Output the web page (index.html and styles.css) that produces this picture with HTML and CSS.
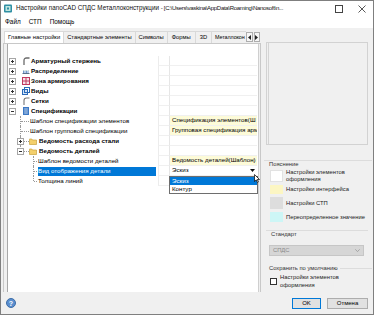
FILE: index.html
```html
<!DOCTYPE html>
<html>
<head>
<meta charset="utf-8">
<link rel="stylesheet" href="styles.css">
</head>
<body>
<div class="window">
  <div class="titlebar">
    <svg class="app-icon" viewBox="0 0 8 9"><rect x="0" y="0.5" width="8" height="8" rx="1" fill="#2f8fa3"/><rect x="1.5" y="2" width="5" height="5" fill="#bfe6e0"/><rect x="3" y="3.5" width="2" height="2" fill="#2f8fa3"/></svg>
    <span class="title">Настройки nanoCAD СПДС Металлоконструкции <span class="path">- [C:\Users\vaskina\AppData\Roaming\Nanosoft\n...</span></span>
    <span class="wbtn"><svg width="8" height="8" viewBox="0 0 8 8"><rect x="0.5" y="0.5" width="7" height="7" fill="none" stroke="#444"/></svg></span>
    <span class="wbtn close"><svg width="8" height="8" viewBox="0 0 8 8"><path d="M0.5 0.5L7.5 7.5M7.5 0.5L0.5 7.5" stroke="#444" stroke-width="0.9"/></svg></span>
  </div>
  <div class="menubar"><span>Файл</span><span>СТП</span><span>Помощь</span></div>
  <div class="client">
    <div class="main">
      <div class="left">
        <div class="tabs">
          <div class="tab-list">
            <span class="tab active">Главные настройки</span>
            <span class="tab">Стандартные элементы</span>
            <span class="tab">Символы</span>
            <span class="tab wide">Формы</span>
            <span class="tab wider">3D</span>
            <span class="tab last">Металлокон</span>
          </div>
          <div class="tab-arrows">
            <span class="tarr"><svg width="3" height="5" viewBox="0 0 3 5"><path d="M3 0V5L0 2.5Z" fill="#222"/></svg></span>
            <span class="tarr"><svg width="3" height="5" viewBox="0 0 3 5"><path d="M0 0V5L3 2.5Z" fill="#222"/></svg></span>
          </div>
        </div>
        <div class="tabpanel">
          <div class="tree">
            <div class="row">
              <div class="name"><span class="exp plus"></span><svg class="ico" viewBox="0 0 8 8"><path d="M2 8V3.5Q2 1 4.5 1H7.5" fill="none" stroke="#6a6a6a" stroke-width="1.3"/></svg><span class="txt b">Арматурный стержень</span></div>
              <div class="gap"></div><div class="val"></div>
            </div>
            <div class="row">
              <div class="name"><span class="exp plus"></span><svg class="ico" viewBox="0 0 8 8"><path d="M0.5 6.5H7.5" stroke="#5a6f8a" stroke-width="1"/><path d="M1.5 4V6M3 4V6M4.5 4V6M6 4V6" stroke="#4a7fc0" stroke-width="0.8"/><path d="M1 3.5H7" stroke="#8aa" stroke-width="0.6" stroke-dasharray="1 0.6"/></svg><span class="txt b">Распределение</span></div>
              <div class="gap"></div><div class="val"></div>
            </div>
            <div class="row">
              <div class="name"><span class="exp plus"></span><svg class="ico" viewBox="0 0 8 8"><rect x="0.5" y="0.5" width="7" height="7" fill="#f6e3ea" stroke="#c03a60"/><path d="M4 0.5V7.5M0.5 4H7.5" stroke="#c03a60"/></svg><span class="txt b">Зона армирования</span></div>
              <div class="gap"></div><div class="val"></div>
            </div>
            <div class="row">
              <div class="name"><span class="exp plus"></span><svg class="ico" viewBox="0 0 8 8"><rect x="0.5" y="2.5" width="5" height="5" fill="#cfe2f7" stroke="#2a6ab8"/><rect x="2.5" y="0.5" width="5" height="5" fill="none" stroke="#2a6ab8"/></svg><span class="txt b">Виды</span></div>
              <div class="gap"></div><div class="val"></div>
            </div>
            <div class="row">
              <div class="name"><span class="exp plus"></span><svg class="ico" viewBox="0 0 8 8"><path d="M2 8V3.5Q2 1 4.5 1H7.5" fill="none" stroke="#777" stroke-width="1.1"/></svg><span class="txt b">Сетки</span></div>
              <div class="gap"></div><div class="val"></div>
            </div>
            <div class="row">
              <div class="name"><span class="exp minus"></span><svg class="ico" viewBox="0 0 8 8"><rect x="1" y="0" width="6" height="8" fill="#3c78c4"/><path d="M2.2 2H5.8M2.2 4H5.8M2.2 6H5.8" stroke="#fff" stroke-width="0.7"/></svg><span class="txt b">Спецификации</span></div>
              <div class="gap"></div><div class="val"></div>
            </div>
            <div class="row">
              <div class="name"><span class="ind8"></span><span class="conn tee"></span><span class="txt l1">Шаблон спецификации элементов</span></div>
              <div class="gap"></div><div class="val y">Спецификация элементов(Ш</div>
            </div>
            <div class="row">
              <div class="name"><span class="ind8"></span><span class="conn tee"></span><span class="txt l1">Шаблон групповой спецификации</span></div>
              <div class="gap"></div><div class="val y">Групповая спецификация арм</div>
            </div>
            <div class="row">
              <div class="name"><span class="ind8"></span><span class="conn tee"><span class="exp plus"></span></span><svg class="folder" viewBox="0 0 8 7"><path d="M0.5 1.5V6.5H7.5V2H3.5L2.8 1H0.5Z" fill="#f3cf6b" stroke="#c9a23c" stroke-width="0.7"/></svg><span class="txt b">Ведомость расхода стали</span></div>
              <div class="gap"></div><div class="val"></div>
            </div>
            <div class="row">
              <div class="name"><span class="ind8"></span><span class="conn elbow"><span class="exp minus"></span></span><svg class="folder" viewBox="0 0 8 7"><path d="M0.5 1.5V6.5H7.5V2H3.5L2.8 1H0.5Z" fill="#f3cf6b" stroke="#c9a23c" stroke-width="0.7"/></svg><span class="txt b">Ведомость деталей</span></div>
              <div class="gap"></div><div class="val"></div>
            </div>
            <div class="row">
              <div class="name"><span class="ind21"></span><span class="conn2 tee"></span><span class="txt l2">Шаблон ведомости деталей</span></div>
              <div class="gap"></div><div class="val y">Ведомость деталей(Шаблон)</div>
            </div>
            <div class="row">
              <div class="name"><span class="ind21"></span><span class="conn2 tee"></span><span class="txt l2 sel">Вид отображения детали</span></div>
              <div class="gap"></div>
              <div class="val open">Эскиз<svg class="dd-arrow" width="5" height="3" viewBox="0 0 5 3"><path d="M0 0H5L2.5 3Z" fill="#111"/></svg>
                <div class="dropdown"><div class="opt sel">Эскиз</div><div class="opt">Контур</div></div>
                <svg class="cursor" width="6" height="9" viewBox="0 0 6 9"><path d="M0.5 0.5V7.5L2.2 5.9L3.4 8.5L4.4 8L3.3 5.5H5.5Z" fill="#fff" stroke="#000" stroke-width="0.7" stroke-linejoin="round"/></svg>
              </div>
            </div>
            <div class="row">
              <div class="name"><span class="ind21"></span><span class="conn2 elbow"></span><span class="txt l2">Толщина линий</span></div>
              <div class="gap"></div><div class="val"></div>
            </div>
          </div>
        </div>
      </div>
      <div class="side">
        <div class="preview"></div>
        <div class="sec-head s1">Пояснение</div>
        <div class="legend">
          <div class="lg-row r1"><span class="sw white"></span><span class="lg-text">Настройки элементов<br>оформления</span></div>
          <div class="lg-row r2"><span class="sw yellow"></span><span class="lg-text">Настройки интерфейса</span></div>
          <div class="lg-row r3"><span class="sw gray"></span><span class="lg-text">Настройки СТП</span></div>
          <div class="lg-row r4"><span class="sw cyan"></span><span class="lg-text">Переопределенное значение</span></div>
        </div>
        <div class="sec-head s2">Стандарт</div>
        <div class="combo"><span>СПДС</span><svg width="5" height="3" viewBox="0 0 5 3"><path d="M0.3 0.3L2.5 2.6L4.7 0.3" fill="none" stroke="#9a9a9a" stroke-width="0.8"/></svg></div>
        <div class="sec-head s3"><span>Сохранить по умолчанию</span><span class="hline"></span></div>
        <div class="check-row"><span class="cb"></span><span class="cb-text">Настройки элементов<br>оформления</span></div>
      </div>
    </div>
    <div class="footer">
      <span class="help">?</span>
      <span class="spacer"></span>
      <span class="btn ok">OK</span>
      <span class="btn cancel">Отмена</span>
    </div>
  </div>
</div>
</body>
</html>
```

FILE: styles.css
```css
* { box-sizing: border-box; margin: 0; padding: 0; }
html, body { margin: 0; padding: 0; }
body {
  width: 374px; height: 315px; overflow: hidden; background: #fff;
  font-family: "Liberation Sans", Arial, sans-serif; font-size: 6.2px; line-height: 1; color: #000;
}
.window {
  width: 374px; height: 315px; border: 1px solid #7f7f7f;
  display: flex; flex-direction: column; background: #fff;
}
.titlebar { height: 15px; flex: none; display: flex; align-items: center; padding-left: 3px; }
.app-icon { width: 8px; height: 9px; flex: none; margin-right: 4px; }
.title { flex: 1; font-size: 6.3px; white-space: nowrap; overflow: hidden; color: #111; }
.title .path { font-size: 6px; letter-spacing: -0.3px; }
.wbtn { width: 22px; height: 15px; flex: none; display: flex; align-items: center; justify-content: center; }
.wbtn.close { width: 23px; }
.menubar { height: 12px; flex: none; display: flex; align-items: center; padding-left: 4px; font-size: 6.4px; }
.menubar span { margin-right: 8px; }
.client { flex: 1; background: #f0f0f0; display: flex; flex-direction: column; min-height: 0; }
.main { flex: 1; display: flex; min-height: 0; }
.left { width: 261px; flex: none; display: flex; flex-direction: column; }

.tabs { height: 12px; margin-top: 3px; margin-left: 3px; display: flex; flex: none; font-size: 5.8px; }
.tab-list { width: 242px; overflow: hidden; display: flex; }
.tab {
  flex: none; padding: 0 3px; display: flex; align-items: center; white-space: nowrap;
  border: 1px solid #d9d9d9; border-bottom: none; margin-right: -1px; background: #f0f0f0;
}
.tab.active { background: #fff; }
.tab.wide { padding: 0 4px; }
.tab.wider { padding: 0 4px; }
.tab.last { flex: 1; padding-left: 3px; padding-right: 0; font-size: 5.4px; letter-spacing: -0.1px; }
.tab-arrows { width: 14px; display: flex; gap: 1px; padding: 1px 0; }
.tarr { flex: 1; border: 1px solid #adadad; background: #f6f6f6; display: flex; align-items: center; justify-content: center; }

.tabpanel {
  flex: 1; margin-left: 2px; width: 258px; border: 1px solid #c8c8c8; border-bottom: none;
  padding: 0 1px 0 3px; display: flex; min-height: 0;
}
.tree { flex: 1; background: #fff; border-left: 1px solid #a8a8a8; border-right: 1px solid #cfcfcf; padding-top: 12px; }
.row { display: flex; height: 10px; }
.name { width: 150px; flex: none; display: flex; align-items: center; white-space: nowrap; }
.gap { width: 11px; flex: none; border-left: 1px solid #ececec; border-bottom: 1px solid #f0f0f0; }
.val {
  width: 88px; flex: none; border-left: 1px solid #e6e6e6; border-bottom: 1px solid #f0f0f0;
  display: flex; align-items: center; padding-left: 2px; white-space: nowrap; overflow: hidden; position: relative;
}
.val.y { background: #fdfbd8; }
.val.open { overflow: visible; }

.exp {
  width: 7px; height: 7px; flex: none; border: 1px solid #a6a6a6; background: #fff;
  margin-left: 1px; margin-right: 6px; position: relative;
}
.exp::before { content: ""; position: absolute; left: 1px; top: 2px; width: 3px; height: 1px; background: #333; }
.exp.plus::after { content: ""; position: absolute; left: 2px; top: 1px; width: 1px; height: 3px; background: #333; }
.ico { width: 8px; height: 8px; flex: none; margin-right: 1px; }
.txt.b { font-weight: bold; }
.txt.l1 { margin-left: 1px; }
.txt.l2 { margin-left: 1px; }
.txt.sel { flex: 1; margin-right: 2px; background: #0078d7; color: #fff; height: 9px; display: flex; align-items: center; }
.ind8 { width: 8px; flex: none; }
.ind21 { width: 21px; flex: none; }
.conn, .conn2 { height: 10px; flex: none; position: relative; }
.conn { width: 13px; }
.conn2 { width: 8px; }
.conn::before, .conn2::before { content: ""; position: absolute; left: 4px; top: 0; bottom: 0; border-left: 1px dotted #9a9a9a; }
.conn.elbow::before, .conn2.elbow::before { bottom: 5px; }
.conn::after, .conn2::after { content: ""; position: absolute; left: 5px; right: 0; top: 5px; border-top: 1px dotted #9a9a9a; }
.conn .exp { position: absolute; left: 1px; top: 1.5px; margin: 0; z-index: 1; }
.folder { width: 8px; height: 7px; flex: none; margin-right: 2px; }

.dd-arrow { margin-left: auto; margin-right: 2px; flex: none; }
.dropdown {
  position: absolute; left: -1px; top: 10px; width: 89px; background: #fff;
  border: 1px solid #6e6e6e; z-index: 3;
}
.opt { height: 8px; display: flex; align-items: center; padding-left: 2px; }
.opt.sel { background: #0078d7; color: #fff; }
.cursor { position: absolute; left: 84px; top: 8px; z-index: 4; }

.side { width: 111px; flex: none; padding: 0 5px 0 4px; display: flex; flex-direction: column; font-size: 5.8px; }
.preview {
  height: 103px; margin-top: 14px; flex: none; border: 1px solid #d2d2d2;
  box-shadow: inset 1px 0 0 #f0f0f0, inset 2px 0 0 #d4d4d4;
}
.sec-head { color: #333; padding-left: 3px; line-height: 7px; height: 8px; flex: none; }
.sec-head.s1 { margin-top: 15px; border-top: 1px solid #dcdcdc; margin-left: -2px; margin-right: -4px; padding-left: 5px; }
.sec-head.s2 { margin-top: 8px; border-top: 1px solid #dcdcdc; padding-left: 5px; }
.sec-head.s3 { margin-top: 8px; display: flex; align-items: center; gap: 2px; }
.hline { flex: 1; height: 1px; background: #dcdcdc; margin-right: -4px; }
.legend { padding-left: 4px; margin-top: 2px; display: flex; flex-direction: column; }
.lg-row { display: flex; align-items: center; }
.lg-row.r1 { height: 12px; }
.lg-row.r2 { height: 9px; margin-top: 3px; }
.lg-row.r3 { height: 12px; margin-top: 3px; }
.lg-row.r4 { height: 10px; margin-top: 3px; }
.sw { width: 13px; height: 100%; flex: none; margin-right: 3px; }
.sw.white { background: #fff; border: 1px solid #e2e2e2; }
.sw.yellow { background: #fcf6c3; }
.sw.gray { background: #dddddd; }
.sw.cyan { background: #cdf6f6; }
.lg-text { color: #222; line-height: 7px; white-space: nowrap; }
.combo {
  margin: 7px 4px 0 3px; height: 11px; flex: none; background: #d6d6d6; border: 1px solid #c6c6c6;
  display: flex; align-items: center; justify-content: space-between; padding: 0 3px; color: #8a8a8a;
}
.check-row { display: flex; align-items: center; margin-top: 2px; padding-left: 4px; }
.cb { width: 7px; height: 7px; flex: none; border: 1px solid #333; background: #fff; margin-right: 3px; }
.cb-text { line-height: 7.5px; color: #222; }

.footer { height: 22px; flex: none; display: flex; align-items: center; padding: 0 5px 0 5px; font-size: 6px; }
.help {
  width: 10px; height: 10px; border-radius: 50%; background: #5b8fcf; color: #fff;
  display: flex; align-items: center; justify-content: center; font-size: 7px; font-weight: bold;
  border: 1px solid #3e6ea8;
}
.spacer { flex: 1; }
.btn {
  height: 11px; display: flex; align-items: center; justify-content: center;
  background: #e1e1e1; border: 1px solid #adadad;
}
.btn.ok { width: 29px; border-color: #0078d7; margin-right: 6px; }
.btn.cancel { width: 41px; }
```
